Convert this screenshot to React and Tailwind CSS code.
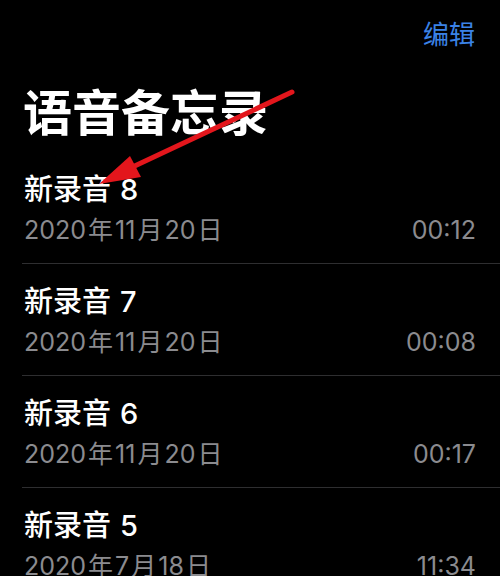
import React from "react";

const rows = [
  { name: "新录音", num: "8", date: ["2020", "年", "11", "月", "20", "日"], time: "00:12" },
  { name: "新录音", num: "7", date: ["2020", "年", "11", "月", "20", "日"], time: "00:08" },
  { name: "新录音", num: "6", date: ["2020", "年", "11", "月", "20", "日"], time: "00:17" },
  { name: "新录音", num: "5", date: ["2020", "年", "7", "月", "18", "日"], time: "11:34" },
];

const mixed = { fontFamily: 'Inter, "Noto Sans CJK SC", sans-serif' };

export default function App() {
  return (
    <div
      className="relative w-[500px] h-[576px] overflow-hidden bg-black text-white"
      style={{ fontFamily: '"Noto Sans CJK SC", "Noto Sans", sans-serif' }}
    >
      <div className="flex justify-end pr-[25px] pt-[13px]">
        <span className="text-[26px] leading-[40px] text-[#3b82e6]">编辑</span>
      </div>
      <h1 className="mt-[29px] pl-[23px] text-[49px] leading-[56px] font-bold">
        语音备忘录
      </h1>
      <div className="mt-[14px] pl-[22px]">
        {rows.map((r, i) => (
          <div key={i} className="flex flex-col border-b border-[#2e2e30] pt-[20px] pb-[13px] pr-[24px]">
            <div className="pl-[2px] text-[29px] leading-[36px] font-medium" style={mixed}>
              {r.name}
              <span className="ml-[9px]">{r.num}</span>
            </div>
            <div
              className="mt-[2px] flex justify-between pl-[2px] text-[25px] leading-[40px] text-[#8b8b8f]"
              style={mixed}
            >
              <span className="flex">
                {r.date.map((p, j) => (
                  <span key={j} className={j % 2 === 1 ? "mx-[2px]" : ""}>
                    {p}
                  </span>
                ))}
              </span>
              <span>{r.time}</span>
            </div>
          </div>
        ))}
      </div>
      <svg
        className="absolute left-0 top-0 pointer-events-none"
        width="500"
        height="576"
        viewBox="0 0 500 576"
      >
        <line x1="292" y1="92" x2="124" y2="171" stroke="#e3161c" strokeWidth="5" strokeLinecap="round" />
        <polygon points="99,184 130,156 141,177" fill="#e3161c" />
      </svg>
    </div>
  );
}
